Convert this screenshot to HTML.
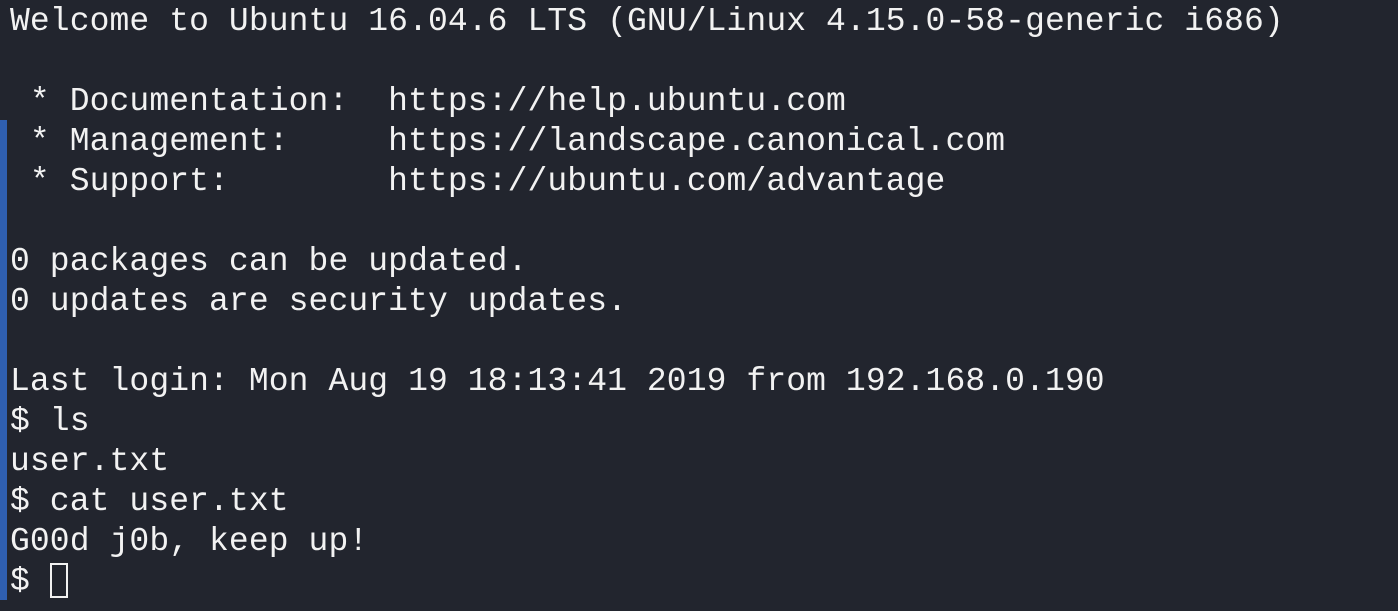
<!DOCTYPE html>
<html><head><style>
html,body{margin:0;padding:0;}
body{width:1398px;height:611px;background:#22252e;overflow:hidden;position:relative;}
.bar{position:absolute;left:0;top:120px;width:7px;height:480px;background:#2f5fb0;}
pre{position:absolute;left:10px;top:2px;margin:0;font-family:"Liberation Mono",monospace;font-size:33px;line-height:40px;color:#f2f2f2;letter-spacing:0.1px;}
.cur{display:inline-block;width:18px;height:35px;border:2px solid #f2f2f2;box-sizing:border-box;vertical-align:-8px;}
</style></head><body>
<div class="bar"></div>
<pre>Welcome to Ubuntu 16.04.6 LTS (GNU/Linux 4.15.0-58-generic i686)

 * Documentation:  https://help.ubuntu.com
 * Management:     https://landscape.canonical.com
 * Support:        https://ubuntu.com/advantage

0 packages can be updated.
0 updates are security updates.

Last login: Mon Aug 19 18:13:41 2019 from 192.168.0.190
$ ls
user.txt
$ cat user.txt
G00d j0b, keep up!
$ <span class="cur"></span></pre>
</body></html>
